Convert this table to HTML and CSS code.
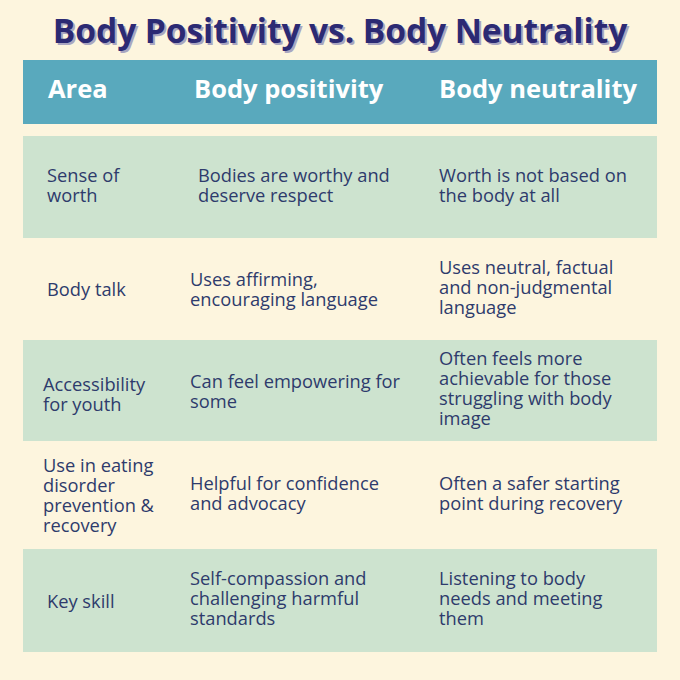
FILE: index.html
```html
<!DOCTYPE html>
<html lang="en">
<head>
<meta charset="utf-8">
<title>Body Positivity vs. Body Neutrality</title>
<link rel="stylesheet" href="styles.css">
</head>
<body>
<main class="page">
  <h1 class="title">Body Positivity vs. Body Neutrality</h1>
  <div class="head">
    <div class="hc c1">Area</div>
    <div class="hc c2">Body positivity</div>
    <div class="hc c3">Body neutrality</div>
  </div>
  <div class="rows">
    <div class="row green r1">
      <div class="cell c1">Sense of<br>worth</div>
      <div class="cell c2">Bodies are worthy and<br>deserve respect</div>
      <div class="cell c3">Worth is not based on<br>the body at all</div>
    </div>
    <div class="row r2">
      <div class="cell c1">Body talk</div>
      <div class="cell c2">Uses affirming,<br>encouraging language</div>
      <div class="cell c3 lift">Uses neutral, factual<br>and non-judgmental<br>language</div>
    </div>
    <div class="row green r3">
      <div class="cell c1">Accessibility<br>for youth</div>
      <div class="cell c2">Can feel empowering for<br>some</div>
      <div class="cell c3 lift">Often feels more<br>achievable for those<br>struggling with body<br>image</div>
    </div>
    <div class="row r4">
      <div class="cell c1">Use in eating<br>disorder<br>prevention &amp;<br>recovery</div>
      <div class="cell c2 lift">Helpful for confidence<br>and advocacy</div>
      <div class="cell c3 lift">Often a safer starting<br>point during recovery</div>
    </div>
    <div class="row green r5">
      <div class="cell c1">Key skill</div>
      <div class="cell c2 lift">Self-compassion and<br>challenging harmful<br>standards</div>
      <div class="cell c3 lift">Listening to body<br>needs and meeting<br>them</div>
    </div>
  </div>
</main>
</body>
</html>
```
FILE: styles.css
```css
html, body {
  margin: 0;
  padding: 0;
  background: #fdf5de;
}
body {
  width: 680px;
  height: 680px;
  overflow: hidden;
  font-family: "Open Sans", "Noto Sans", sans-serif;
}
.page {
  padding: 10px 23px 0 23px;
}
.title {
  margin: 0 0 10px 0;
  height: 40px;
  font-size: 33.6px;
  line-height: 40px;
  font-weight: 700;
  color: #2c2a73;
  text-align: center;
  text-shadow: 2px 2px 0 #aaa6c0;
  white-space: nowrap;
  letter-spacing: -0.1px;
}
.head {
  display: grid;
  grid-template-columns: 167px 249px 1fr;
  height: 64px;
  box-sizing: border-box;
  padding-top: 13px;
  background: #59a9bd;
  color: #ffffff;
  font-weight: 700;
  font-size: 25.5px;
  line-height: 30px;
  white-space: nowrap;
}
.head .c1 { padding-left: 25px; }
.head .c2 { padding-left: 4px; }
.head .c3 { padding-left: 0; }
.rows {
  margin-top: 12px;
  display: flex;
  flex-direction: column;
}
.row {
  display: grid;
  grid-template-columns: 167px 249px 1fr;
  align-items: center;
  color: #2e3b6c;
  font-size: 18.3px;
  line-height: 20px;
  white-space: nowrap;
}
.row.green { background: #cde3cf; }
.r1 { height: 102px; }
.r2 { height: 102px; }
.r3 { height: 101px; }
.r4 { height: 108px; }
.r5 { height: 103px; }
.cell.c1 { padding-left: 24px; }
.r3 .cell.c1, .r4 .cell.c1 { padding-left: 20px; }
.r1 .cell.c2 { padding-left: 8px; }
.r1 .cell { margin-top: -4px; }
.r3 .cell.c1 { margin-top: 6px; }
.cell.lift { margin-bottom: 5px; }
```
